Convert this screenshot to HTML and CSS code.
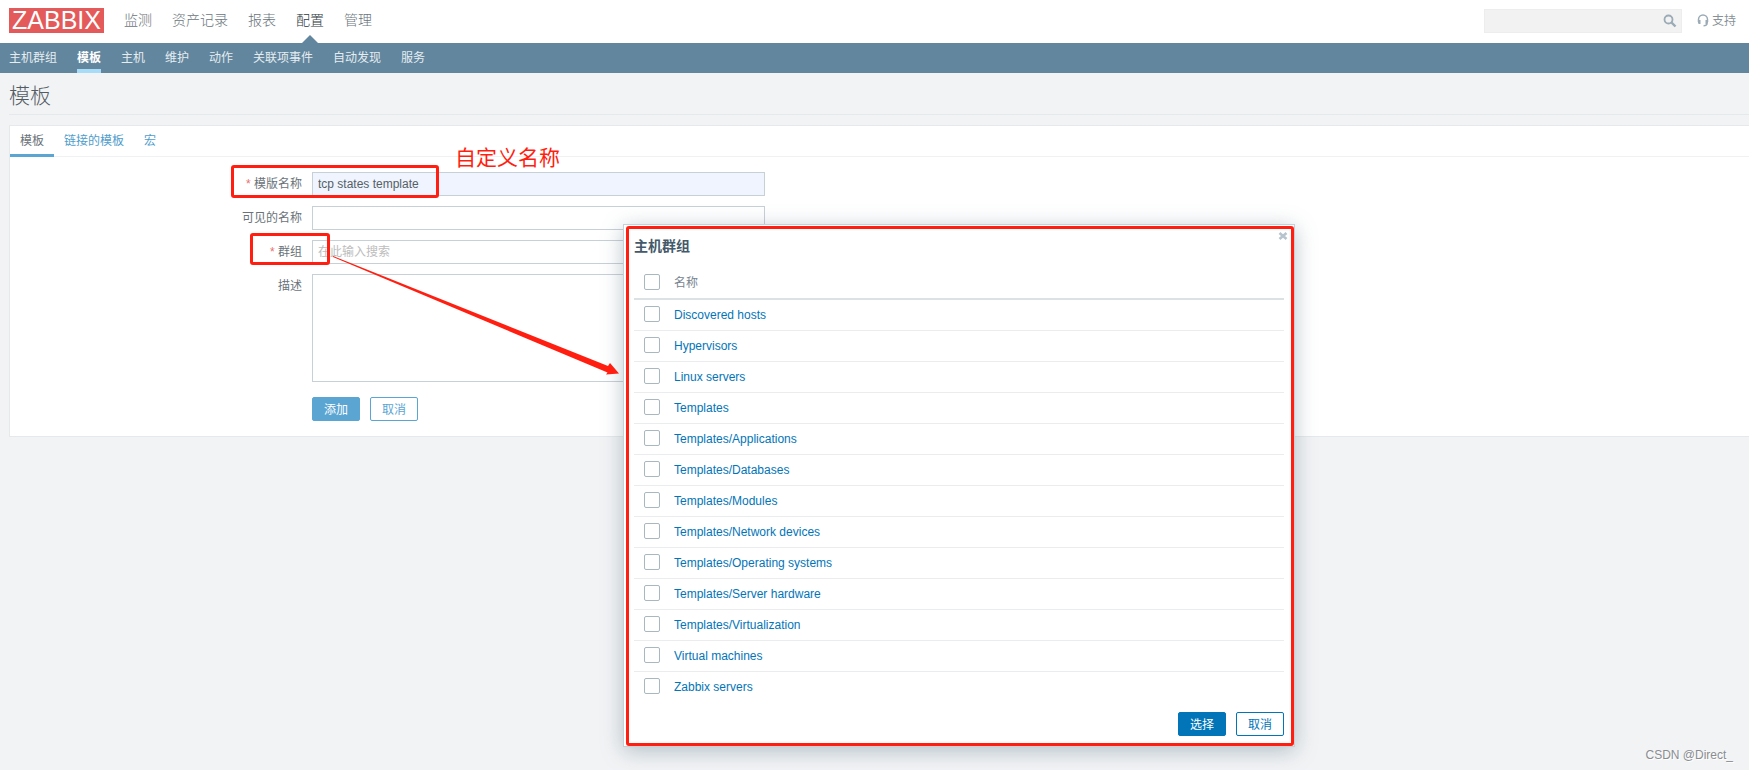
FILE: index.html
```html
<!DOCTYPE html>
<html lang="zh-CN">
<head>
<meta charset="utf-8">
<title>模板</title>
<link rel="stylesheet" href="styles.css">
</head>
<body>
<header class="top">
  <a class="logo" href="#">ZABBIX</a>
  <nav class="menu">
    <a href="#">监测</a>
    <a href="#">资产记录</a>
    <a href="#">报表</a>
    <a href="#" class="current">配置</a>
    <a href="#">管理</a>
  </nav>
  <form class="search">
    <input type="text" aria-label="搜索">
    <button type="button" aria-label="搜索">
      <svg width="14" height="14" viewBox="0 0 14 14"><circle cx="5.5" cy="5.5" r="4" fill="none" stroke="#9aabb6" stroke-width="1.8"/><path d="M8.5 8.5L12.5 12.5" stroke="#9aabb6" stroke-width="2.4"/></svg>
    </button>
  </form>
  <a class="support" href="#">
    <svg width="12" height="13" viewBox="0 0 12 13"><path d="M1.5 8V5.5a4.5 4.5 0 0 1 9 0V8" fill="none" stroke="#9aabb6" stroke-width="1.5"/><path d="M1 6h2.5v4H2.2Q1 10 1 8.5zM8.500 6H11v2.500Q11 10 9.800 10H8.500z" fill="#9aabb6"/><path d="M10.300 9.500Q9.800 11.500 6.500 11.800" fill="none" stroke="#9aabb6" stroke-width="1.300"/></svg>
    <span>支持</span>
  </a>
</header>
<nav class="submenu">
  <a href="#">主机群组</a>
  <a href="#" class="current">模板</a>
  <a href="#">主机</a>
  <a href="#">维护</a>
  <a href="#">动作</a>
  <a href="#">关联项事件</a>
  <a href="#">自动发现</a>
  <a href="#">服务</a>
</nav>
<main class="content">
  <h1>模板</h1>
  <section class="panel">
    <nav class="tabs">
      <a href="#" class="current">模板</a>
      <a href="#">链接的模板</a>
      <a href="#">宏</a>
    </nav>
    <form class="fields">
      <label for="name" class="required">模版名称</label>
      <input id="name" class="filled" type="text" value="tcp states template">
      <label for="visible">可见的名称</label>
      <input id="visible" type="text">
      <label for="groups" class="required">群组</label>
      <input id="groups" type="text" placeholder="在此输入搜索">
      <label for="description">描述</label>
      <textarea id="description"></textarea>
      <div class="actions">
        <button type="button" class="btn solid">添加</button>
        <button type="button" class="btn">取消</button>
      </div>
    </form>
  </section>
</main>

<div class="mark mark-name"></div>
<div class="mark mark-group"></div>
<p class="note">自定义名称</p>

<div class="modal" role="dialog" aria-labelledby="modal-title">
  <button type="button" class="close" aria-label="关闭">
    <svg width="10" height="8" viewBox="0 0 10 8"><path d="M1.500 1L8.500 7M8.500 1L1.500 7" stroke="#b8c4cd" stroke-width="2.600"/></svg>
  </button>
  <h2 id="modal-title">主机群组</h2>
  <table>
    <thead>
      <tr><th class="tick"><input type="checkbox" aria-label="全选"></th><th>名称</th></tr>
    </thead>
    <tbody>
      <tr><td class="tick"><input type="checkbox" aria-label="Discovered hosts"></td><td><a href="#">Discovered hosts</a></td></tr>
      <tr><td class="tick"><input type="checkbox" aria-label="Hypervisors"></td><td><a href="#">Hypervisors</a></td></tr>
      <tr><td class="tick"><input type="checkbox" aria-label="Linux servers"></td><td><a href="#">Linux servers</a></td></tr>
      <tr><td class="tick"><input type="checkbox" aria-label="Templates"></td><td><a href="#">Templates</a></td></tr>
      <tr><td class="tick"><input type="checkbox" aria-label="Templates/Applications"></td><td><a href="#">Templates/Applications</a></td></tr>
      <tr><td class="tick"><input type="checkbox" aria-label="Templates/Databases"></td><td><a href="#">Templates/Databases</a></td></tr>
      <tr><td class="tick"><input type="checkbox" aria-label="Templates/Modules"></td><td><a href="#">Templates/Modules</a></td></tr>
      <tr><td class="tick"><input type="checkbox" aria-label="Templates/Network devices"></td><td><a href="#">Templates/Network devices</a></td></tr>
      <tr><td class="tick"><input type="checkbox" aria-label="Templates/Operating systems"></td><td><a href="#">Templates/Operating systems</a></td></tr>
      <tr><td class="tick"><input type="checkbox" aria-label="Templates/Server hardware"></td><td><a href="#">Templates/Server hardware</a></td></tr>
      <tr><td class="tick"><input type="checkbox" aria-label="Templates/Virtualization"></td><td><a href="#">Templates/Virtualization</a></td></tr>
      <tr><td class="tick"><input type="checkbox" aria-label="Virtual machines"></td><td><a href="#">Virtual machines</a></td></tr>
      <tr><td class="tick"><input type="checkbox" aria-label="Zabbix servers"></td><td><a href="#">Zabbix servers</a></td></tr>
    </tbody>
  </table>
  <div class="modal-actions">
    <button type="button" class="btn solid">选择</button>
    <button type="button" class="btn">取消</button>
  </div>
</div>
<svg class="arrow" width="286" height="121" viewBox="0 0 286 121"><path d="M0 0L275 110L277 107L286 117.500L273 118.500L274.500 116.500L0 1Z" fill="#ff1e10"/></svg>
<p class="watermark">CSDN @Direct_</p>
</body>
</html>
```
FILE: styles.css
```css
* {
  box-sizing: border-box;
}

body {
  position: relative;
  min-height: 100vh;
  margin: 0;
  background: #f2f3f5;
  color: #6a737a;
  font: 12px/18px "Liberation Sans", "Noto Sans CJK SC", sans-serif;
}

a {
  color: inherit;
  text-decoration: none;
}

input,
textarea,
button {
  margin: 0;
  font: inherit;
}

/* header */
.top {
  display: flex;
  align-items: center;
  height: 43px;
  padding: 0 13px 2px 9px;
  background: #fff;
}

.logo {
  width: 95px;
  height: 25px;
  background: #e45959;
  color: #fff;
  font: 25px/25px "Liberation Sans", sans-serif;
  text-align: center;
}

.menu {
  display: flex;
  align-self: stretch;
  gap: 20px;
  margin-left: 20px;
  color: #69747b;
  font-size: 14px;
  font-weight: 300;
  line-height: 40px;
}

.menu .current {
  position: relative;
  color: #2f383d;
}

.menu .current::after {
  content: "";
  position: absolute;
  bottom: -2px;
  left: 6px;
  border: 8px solid transparent;
  border-top: 0;
  border-bottom-color: #61869e;
}

.search {
  position: relative;
  width: 198px;
  margin-left: auto;
}

.search input {
  display: block;
  width: 100%;
  height: 24px;
  padding: 0 30px 0 5px;
  border: 1px solid #ededee;
  background: #f2f2f2;
}

.search button {
  position: absolute;
  top: 5px;
  right: 5px;
  display: flex;
  padding: 0;
  border: 0;
  background: none;
}

.support {
  display: flex;
  align-items: center;
  gap: 3px;
  margin-left: 15px;
  color: #879197;
}

.submenu {
  display: flex;
  gap: 20px;
  height: 30px;
  padding: 0 9px;
  background: #61869e;
  color: #e6edf1;
  line-height: 30px;
}

.submenu .current {
  border-bottom: 4px solid #a8dbf8;
  color: #fff;
  font-weight: bold;
}

/* page */
.content {
  padding: 0 0 0 9px;
}

h1 {
  margin: 0 0 10px;
  padding-top: 4px;
  border-bottom: 1px solid #e6e9eb;
  color: #535c63;
  font-size: 21px;
  font-weight: 300;
  line-height: 37px;
}

.panel {
  border: 1px solid #e6e9eb;
  border-right: 0;
  background: #fff;
}

.tabs {
  display: flex;
  height: 31px;
  border-bottom: 1px solid #f0f1f2;
  color: #4f9dcc;
  line-height: 30px;
}

.tabs a {
  height: 31px;
  padding: 0 10px;
}

.tabs .current {
  border-bottom: 3px solid #5ba5d3;
  color: #6a737a;
}

.fields {
  display: grid;
  grid-template-columns: 292px 453px;
  gap: 10px;
  padding: 15px 0;
}

.fields label {
  line-height: 24px;
  text-align: right;
}

.required::before {
  content: "* ";
  color: #e97070;
}

.fields input,
.fields textarea {
  width: 100%;
  height: 24px;
  padding: 0 5px;
  border: 1px solid #c7d0d5;
  border-radius: 0;
  background: #fff;
  color: #555f66;
}

.fields textarea {
  display: block;
  height: 108px;
  resize: none;
}

.fields .filled {
  background: #f0f4fe;
}

::placeholder {
  color: #bdbdbd;
  opacity: 1;
}

.actions {
  display: flex;
  grid-column: 2;
  gap: 10px;
  padding-top: 5px;
}

.btn {
  width: 48px;
  height: 24px;
  padding: 1px 0 0;
  border: 1px solid #5ba5d3;
  border-radius: 2px;
  background: #fff;
  color: #5ba5d3;
}

.btn.solid {
  background: #5ba5d3;
  color: #fff;
}

/* dialog */
.modal {
  position: absolute;
  top: 224px;
  left: 623px;
  width: 672px;
  padding: 0 10px 10px;
  border: 1px solid #c7d0d5;
  background: #fff;
  box-shadow: 0 4px 20px rgba(88, 118, 130, 0.4);
}

.modal::after {
  content: "";
  position: absolute;
  inset: 1px 0 0 2px;
  border: 3px solid #ff1e10;
  border-radius: 3px;
  pointer-events: none;
}

.close {
  position: absolute;
  top: 7px;
  right: 6px;
  display: flex;
  padding: 0;
  border: 0;
  background: none;
}

h2 {
  margin: 0;
  color: #44596a;
  font-size: 14px;
  line-height: 42px;
}

table {
  width: 100%;
  border-spacing: 0;
}

th,
td {
  height: 31px;
  padding: 0 5px;
  border-bottom: 1px solid #eaecee;
  font-weight: normal;
  text-align: left;
}

th {
  height: 33px;
  border-bottom: 2px solid #dce1e4;
  color: #768490;
}

tr:last-child td {
  border-bottom-color: transparent;
}

thead tr:last-child th {
  border-bottom-color: #dce1e4;
}

.tick {
  width: 35px;
  padding: 0 0 2px 10px;
}

.tick input {
  display: block;
  width: 16px;
  height: 16px;
  border: 1px solid #a9b7c1;
  border-radius: 2px;
  background: #fff;
  appearance: none;
}

td a {
  color: #0275b8;
}

.modal-actions {
  display: flex;
  justify-content: flex-end;
  gap: 10px;
  padding-top: 9px;
}

.modal .btn {
  border-color: #0275b8;
  color: #0275b8;
}

.modal .btn.solid {
  background: #0275b8;
  color: #fff;
}

/* annotations over the page */
.mark {
  position: absolute;
  border: 3px solid #ff1e10;
  border-radius: 3px;
}

.mark-name {
  top: 165px;
  left: 231px;
  width: 208px;
  height: 33px;
}

.mark-group {
  top: 233px;
  left: 250px;
  width: 80px;
  height: 32px;
}

.note {
  position: absolute;
  top: 143px;
  left: 455px;
  margin: 0;
  color: #ff1e10;
  font-size: 21px;
  line-height: 30px;
}

.arrow {
  position: absolute;
  top: 256px;
  left: 333px;
}

.watermark {
  position: absolute;
  right: 16px;
  bottom: 6px;
  margin: 0;
  color: #8a8d90;
  text-shadow: 1px 1px 0 #fff;
}
```
